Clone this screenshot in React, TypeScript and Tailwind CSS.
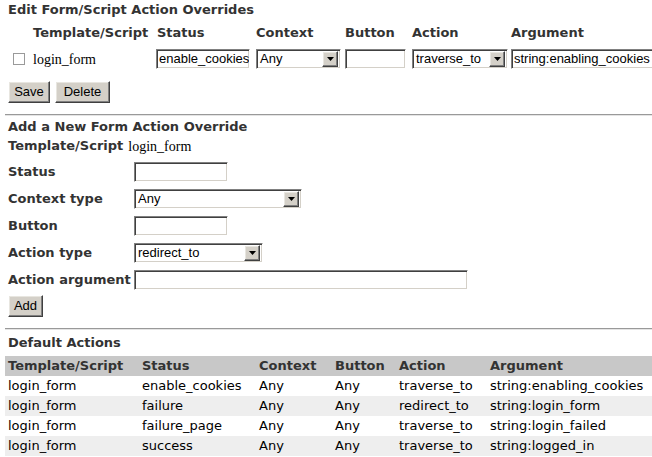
import React from 'react'

const inset =
  'border border-t-[#808080] border-l-[#808080] border-b-white border-r-white shadow-[inset_1px_1px_0_#404040,inset_-1px_-1px_0_#d4d0c8] bg-white'
const raised =
  'border border-t-white border-l-white border-b-[#404040] border-r-[#404040] shadow-[inset_-1px_-1px_0_#808080,inset_1px_1px_0_#e8e6e0] bg-[#d4d0c8]'

const TextBox = ({ w, value = '' }: { w: string; value?: string }) => (
  <div className={`${inset} ${w} h-[20px] flex items-center pl-[2px] overflow-hidden whitespace-nowrap font-['Liberation_Sans',Arial,sans-serif] text-[13px] text-black`}>
    {value}
  </div>
)

const Select = ({ w, value }: { w: string; value: string }) => (
  <div className={`${inset} ${w} h-[20px] flex items-center justify-between pl-[3px] pr-[2px] font-['Liberation_Sans',Arial,sans-serif] text-[13px] text-black`}>
    <span className="whitespace-nowrap">{value}</span>
    <span className={`${raised} w-[16px] h-[16px] flex items-center justify-center`}>
      <svg width="7" height="4" viewBox="0 0 7 4">
        <path d="M0 0h7L3.5 4z" fill="#000" />
      </svg>
    </span>
  </div>
)

const Btn = ({ w, label }: { w: string; label: string }) => (
  <div className={`${raised} ${w} h-[22px] flex items-center justify-center font-['Liberation_Sans',Arial,sans-serif] text-[13px] text-black`}>
    {label}
  </div>
)

const Rule = () => (
  <div className="-ml-[3px] w-[660px]">
    <div className="h-px bg-[#999]" />
    <div className="h-px bg-[#e4e4e4]" />
  </div>
)

const defaults = [
  ['login_form', 'enable_cookies', 'Any', 'Any', 'traverse_to', 'string:enabling_cookies'],
  ['login_form', 'failure', 'Any', 'Any', 'redirect_to', 'string:login_form'],
  ['login_form', 'failure_page', 'Any', 'Any', 'traverse_to', 'string:login_failed'],
  ['login_form', 'success', 'Any', 'Any', 'traverse_to', 'string:logged_in'],
]

const topCols = 'grid grid-cols-[25px_123px_100px_89px_67px_99px_1fr]'
const tableCols = 'grid grid-cols-[134px_117px_76px_64px_91px_1fr]'

const FormRow = ({ label, children }: { label: string; children: React.ReactNode }) => (
  <div className="flex items-center h-[20px]">
    <div className="w-[126px] font-bold text-[#333]">{label}</div>
    {children}
  </div>
)

export default function App() {
  return (
    <div className="w-[652px] h-[457px] overflow-hidden bg-white pl-[8px] font-['DejaVu_Sans',Verdana,sans-serif] text-[13px] text-black">
      <div className="h-[20px] leading-[20px] font-bold text-[#333]">Edit Form/Script Action Overrides</div>

      <div className={`${topCols} mt-[3px] h-[20px] items-center font-bold text-[#333]`}>
        <div />
        <div>Template/Script</div>
        <div className="pl-[1px]">Status</div>
        <div>Context</div>
        <div>Button</div>
        <div>Action</div>
        <div>Argument</div>
      </div>

      <div className={`${topCols} mt-[5px] h-[22px] items-center`}>
        <div className="pl-[5px]">
          <div className="w-[12px] h-[12px] border border-[#9a9a9a] bg-white" />
        </div>
        <div className="font-['Liberation_Serif',serif] text-[14px]">login_form</div>
        <TextBox w="w-[94px]" value="enable_cookies" />
        <Select w="w-[85px]" value="Any" />
        <TextBox w="w-[61px]" />
        <Select w="w-[96px]" value="traverse_to" />
        <TextBox w="w-[160px]" value="string:enabling_cookies" />
      </div>

      <div className="flex gap-[5px] mt-[11px]">
        <Btn w="w-[42px]" label="Save" />
        <Btn w="w-[55px]" label="Delete" />
      </div>

      <div className="mt-[11px]">
        <Rule />
      </div>

      <div className="mt-[1px] h-[20px] leading-[20px] font-bold text-[#333]">Add a New Form Action Override</div>
      <div className="flex items-center h-[18px]">
        <div className="font-bold text-[#333] mr-[5px]">Template/Script</div>
        <div className="font-['Liberation_Serif',serif] text-[14px]">login_form</div>
      </div>

      <div className="mt-[7px] flex flex-col gap-[7px]">
        <FormRow label="Status">
          <TextBox w="w-[94px]" />
        </FormRow>
        <FormRow label="Context type">
          <Select w="w-[168px]" value="Any" />
        </FormRow>
        <FormRow label="Button">
          <TextBox w="w-[94px]" />
        </FormRow>
        <FormRow label="Action type">
          <Select w="w-[129px]" value="redirect_to" />
        </FormRow>
        <FormRow label="Action argument">
          <TextBox w="w-[334px]" />
        </FormRow>
      </div>

      <div className="mt-[5px] flex">
        <Btn w="w-[35px]" label="Add" />
      </div>

      <div className="mt-[11px]">
        <Rule />
      </div>

      <div className="mt-[3px] h-[20px] leading-[20px] font-bold text-[#333]">Default Actions</div>

      <div className="mt-[3px] -ml-[3px]">
        <div className={`${tableCols} h-[20px] items-center bg-[#c8c8c8] font-bold text-[#333]`}>
          {['Template/Script', 'Status', 'Context', 'Button', 'Action', 'Argument'].map((h) => (
            <div key={h} className="pl-[3px] whitespace-nowrap">{h}</div>
          ))}
        </div>
        {defaults.map((row, i) => (
          <div key={i} className={`${tableCols} h-[20px] items-center ${i % 2 ? 'bg-[#eeeeee]' : 'bg-white'}`}>
            {row.map((c, j) => (
              <div key={j} className="pl-[3px] whitespace-nowrap">{c}</div>
            ))}
          </div>
        ))}
      </div>
    </div>
  )
}
